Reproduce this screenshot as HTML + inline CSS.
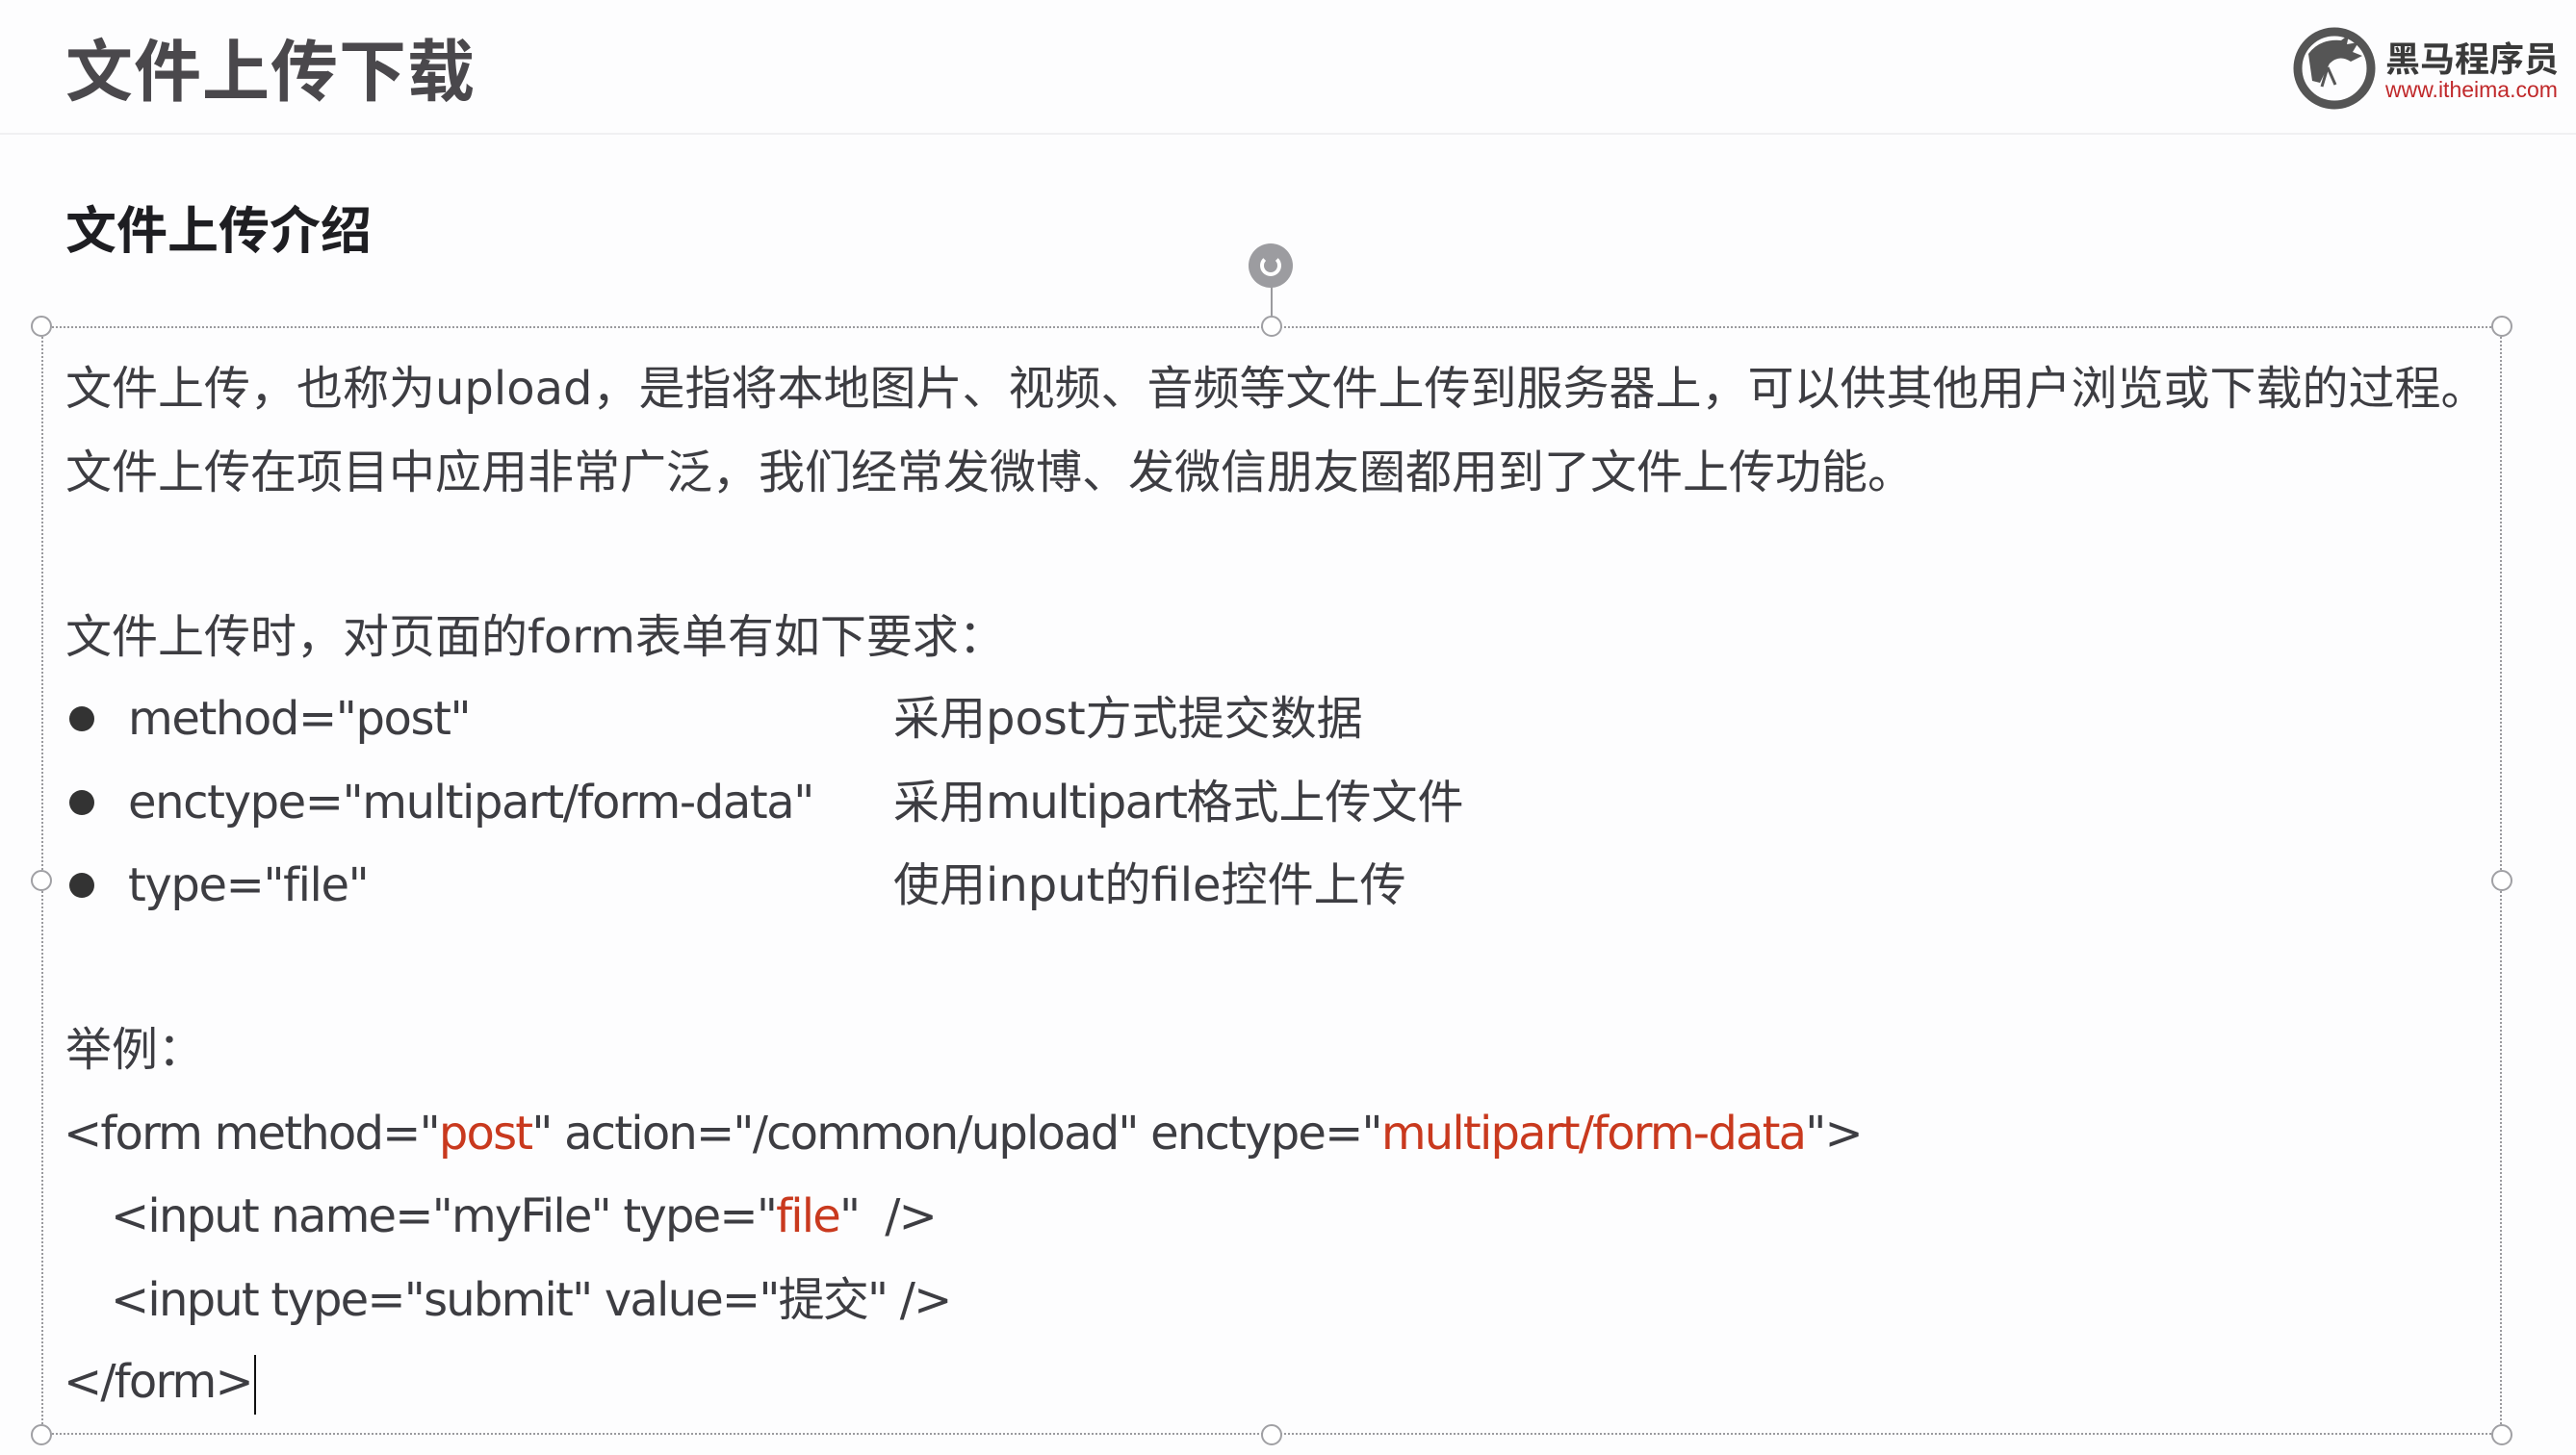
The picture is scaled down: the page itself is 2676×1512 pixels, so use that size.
<!DOCTYPE html>
<html><head><meta charset="utf-8">
<style>
*{margin:0;padding:0;box-sizing:border-box}
body{width:2676px;height:1512px;background:#fdfdfe;position:relative;overflow:hidden;font-family:"DejaVu Sans","Noto Sans CJK SC",sans-serif;color:#3d3d42}
.hdr{position:absolute;left:0;top:0;width:2676px;height:140px;border-bottom:2px solid #f0f0f2;background:#fdfdfe}
.title{position:absolute;left:68px;top:30px;font-family:"Liberation Sans","Noto Sans CJK SC",sans-serif;font-size:70px;font-weight:bold;color:#4a484c;line-height:90px;letter-spacing:1px}
.sub{position:absolute;left:68px;top:206px;font-family:"Liberation Sans","Noto Sans CJK SC",sans-serif;font-size:53px;font-weight:bold;color:#1e1e22;line-height:70px}
.l{position:absolute;font-size:48px;line-height:80px;white-space:nowrap}
.c{letter-spacing:-1.8px}
.b{letter-spacing:-1.4px}
.r{color:#c9391e}
.box{position:absolute;left:43px;top:339px;width:2556px;height:1152px;border:2px dotted #9a9a9e}
.h{position:absolute;width:22px;height:22px;border:2px solid #a0a0a4;border-radius:50%;background:#fff}
.dot{position:absolute;left:72px;width:26px;height:26px;border-radius:50%;background:#333}
</style></head><body>
<div class="hdr"></div>
<div class="title">文件上传下载</div>
<svg style="position:absolute;left:2380px;top:26px" width="90" height="90" viewBox="0 0 90 90">
<circle cx="45" cy="45" r="38" fill="none" stroke="#555" stroke-width="9"/>
<path d="M18 30 Q30 14 52 16 L60 10 L58 20 L70 18 L64 28 L74 32 L62 38 Q50 30 40 40 L30 60 L22 58 Z" fill="#555"/>
<path d="M38 44 L32 64 M38 44 L46 62" stroke="#555" stroke-width="3" fill="none"/>
</svg>
<div style="position:absolute;left:2478px;top:40px;font-family:'Liberation Sans','Noto Sans CJK SC',sans-serif;font-size:36px;font-weight:bold;color:#3a3a3a;line-height:44px">黑马程序员</div>
<div style="position:absolute;left:2478px;top:80px;font-family:'Liberation Sans',sans-serif;font-size:23px;color:#c0282a;line-height:26px">www.itheima.com</div>

<div class="sub">文件上传介绍</div>

<div class="box"></div>
<div style="position:absolute;left:1320px;top:290px;width:2px;height:48px;background:#9a9a9e"></div>
<div style="position:absolute;left:1297px;top:253px;width:46px;height:46px;border-radius:50%;background:#9c9ca0"></div>
<div style="position:absolute;left:1309px;top:265px;width:22px;height:22px;border-radius:50%;border:4px solid #fff;border-top-color:transparent"></div>
<div class="h" style="left:32px;top:328px"></div>
<div class="h" style="left:1310px;top:328px"></div>
<div class="h" style="left:2588px;top:328px"></div>
<div class="h" style="left:32px;top:904px"></div>
<div class="h" style="left:2588px;top:904px"></div>
<div class="h" style="left:32px;top:1480px"></div>
<div class="h" style="left:1310px;top:1480px"></div>
<div class="h" style="left:2588px;top:1480px"></div>

<div class="l" style="left:68px;top:364px">文件上传，也称为upload，是指将本地图片、视频、音频等文件上传到服务器上，可以供其他用户浏览或下载的过程。</div>
<div class="l" style="left:68px;top:451px">文件上传在项目中应用非常广泛，我们经常发微博、发微信朋友圈都用到了文件上传功能。</div>
<div class="l" style="left:68px;top:622px">文件上传时，对页面的form表单有如下要求：</div>
<div class="dot" style="top:734px"></div>
<div class="l b" style="left:133px;top:707px">method="post"</div>
<div class="l" style="left:928px;top:707px">采用post方式提交数据</div>
<div class="dot" style="top:821px"></div>
<div class="l b" style="left:133px;top:794px">enctype="multipart/form-data"</div>
<div class="l" style="left:928px;top:794px">采用<span class="b">multipart</span>格式上传文件</div>
<div class="dot" style="top:907px"></div>
<div class="l b" style="left:133px;top:880px">type="file"</div>
<div class="l" style="left:928px;top:880px">使用input的file控件上传</div>
<div class="l" style="left:68px;top:1051px">举例：</div>
<div class="l c" style="left:66px;top:1138px">&lt;form method="<span class="r">post</span>" action="/common/upload" enctype="<span class="r">multipart/form-data</span>"&gt;</div>
<div class="l c" style="left:115px;top:1224px">&lt;input name="myFile" type="<span class="r">file</span>"&nbsp; /&gt;</div>
<div class="l c" style="left:115px;top:1311px">&lt;input type="submit" value="提交" /&gt;</div>
<div class="l c" style="left:66px;top:1396px">&lt;/form&gt;<span style="display:inline-block;width:2px;height:62px;background:#111;vertical-align:middle;margin-left:2px"></span></div>
</body></html>
